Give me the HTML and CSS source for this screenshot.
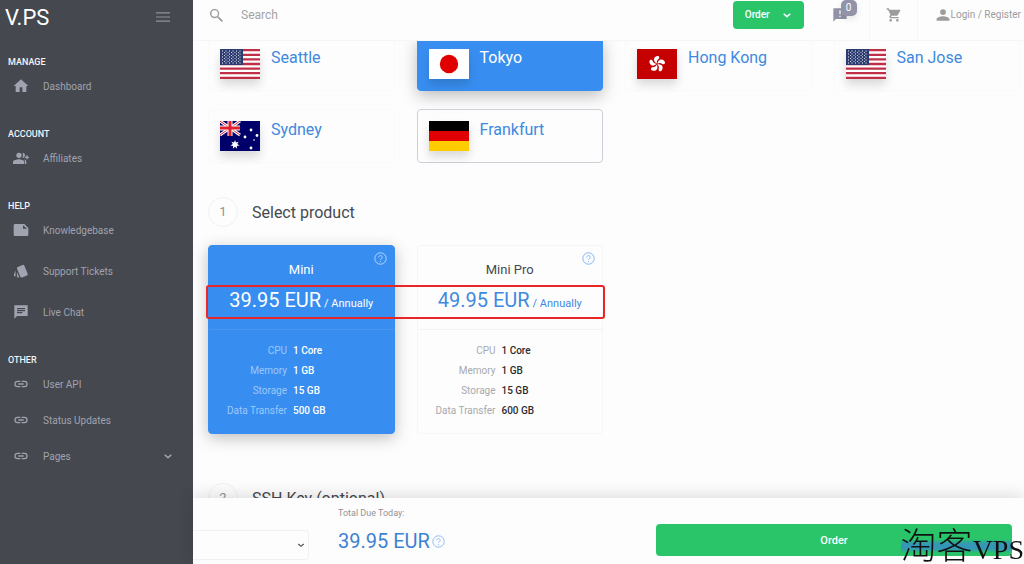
FILE: index.html
```html
<!DOCTYPE html>
<html lang="en">
<head>
    <meta charset="UTF-8">
    <meta name="viewport" content="width=device-width, initial-scale=1.0">
    <title>V.PS</title>
    <link rel="stylesheet" href="styles.css">
</head>
<body>

    <!-- Shared icons -->
    <svg class="sprite" aria-hidden="true">
        <symbol id="i-home" viewBox="0 0 24 24"><path d="M10 21v-7h4v7h6v-9h3L12 2 1 12h3v9z"/></symbol>
        <symbol id="i-group" viewBox="0 0 24 24"><circle cx="9" cy="8" r="4"/><path d="M9 14c-3 0-9 1.400-9 4v3h17v-3c0-2.600-5-4-8-4zM14 4a4 4 0 0 1 0 8c1.400-2.400 1.400-5.600 0-8zM16 14c3 1 4 2 4 4v3h-2v-3c0-2-1-3-2-4zM20 8h2v2h2v2h-2v2h-2v-2h-2v-2h2z"/></symbol>
        <symbol id="i-note" viewBox="0 0 24 24"><path d="M3 3C1.900 3 1 3.900 1 5v14c0 1.100.9 2 2 2h18c1.100 0 2-.9 2-2V9l-6-6zm12 2 6 5h-6z" fill-rule="evenodd"/></symbol>
        <symbol id="i-cards" viewBox="0 0 24 24"><path d="M2.500 19.700l1.300.5v-9l-2.400 5.900c-.4 1 .1 2.200 1.100 2.600zM22 16 17.100 4a2 2 0 0 0-2.600-1L7.100 6a2 2 0 0 0-1.100 2.600l5 12a2 2 0 0 0 2.600 1l7.400-3a2 2 0 0 0 1-2.600zM5.900 19.800c0 1.100.9 2 2 2h1.500l-3.500-8.400z"/></symbol>
        <symbol id="i-chat" viewBox="0 0 24 24"><path fill-rule="evenodd" d="M2 2h20v16H6l-4 4zM6 12v2h8v-2zm0-3v2h12V9zm0-3v2h12V6z"/></symbol>
        <symbol id="i-link" viewBox="0 0 24 24"><path d="M3.900 12A3.100 3.100 0 0 1 7 8.900h4V7H7a5 5 0 0 0 0 10h4v-1.900H7A3.100 3.100 0 0 1 3.900 12zM8 13h8v-2H8zm9-6h-4v1.900h4a3.100 3.100 0 0 1 0 6.200h-4V17h4a5 5 0 0 0 0-10z"/></symbol>
        <symbol id="i-down" viewBox="0 0 24 24"><path d="M4 9l8 7 8-7" fill="none" stroke="currentColor" stroke-width="3.500"/></symbol>
        <symbol id="i-menu" viewBox="0 0 24 24"><path d="M0 4h24v2H0zm0 7h24v2H0zm0 7h24v2H0z"/></symbol>
        <symbol id="i-search" viewBox="0 0 24 24"><path d="M16.500 14.500h-.8l-.3-.3A7 7 0 1 0 14.200 15.400l.3.300v.8l6 6 2-2zm-6.500 0a4.800 4.800 0 1 1 0-9.600 4.800 4.800 0 0 1 0 9.600z"/></symbol>
        <symbol id="i-cart" viewBox="0 0 24 24"><path d="M7 18a2 2 0 1 0 0 4 2 2 0 0 0 0-4zM1 2v2h2l3.600 7.600L5.200 14c-.7 1.300.3 3 1.800 3h12v-2H7.400l1.100-2H16c.8 0 1.400-.4 1.700-1l3.600-6.500c.4-.7-.1-1.500-.9-1.500H5.200l-.9-2zm16 16a2 2 0 1 0 0 4 2 2 0 0 0 0-4z"/></symbol>
        <symbol id="i-user" viewBox="0 0 24 24"><circle cx="12" cy="7" r="5"/><path d="M12 14c-4 0-11 2-11 5v3h22v-3c0-3-7-5-11-5z"/></symbol>
        <symbol id="i-alert" viewBox="0 0 24 24"><path fill-rule="evenodd" d="M2 2h20v16H6l-4 4zM11 5v6h2V5zm0 8v2h2v-2z"/></symbol>
        <symbol id="i-help" viewBox="0 0 24 24"><circle cx="12" cy="12" r="10.500" fill="none" stroke="currentColor" stroke-width="1.800"/><path d="M8.800 10a3.200 3.200 0 1 1 5 2.500c-1.200.8-1.800 1.200-1.800 2.500M12 17v2" fill="none" stroke="currentColor" stroke-width="1.800"/></symbol>
        <symbol id="f-us" viewBox="0 0 40 30">
            <path fill="#fff" d="M0 0h40v30H0z"/>
            <path stroke="#bf3048" stroke-width="2.300" d="M0 1.200h40M0 5.800h40M0 10.400h40M0 15h40M0 19.600h40M0 24.200h40M0 28.800h40"/>
            <path fill="#2c3b70" d="M0 0h23v16H0z"/>
            <path stroke="#fff" stroke-width="1" stroke-dasharray="1 2.500" d="M2 2h20M2 5h20M2 8h20M2 11h20M2 14h20"/>
            <path stroke="#c5cbe0" stroke-width="1" stroke-dasharray="1 2.500" d="M4 3.500h17M4 6.500h17M4 9.500h17M4 12.500h17"/>
        </symbol>
        <symbol id="f-jp" viewBox="0 0 40 30"><path fill="#fff" d="M0 0h40v30H0z"/><circle cx="20" cy="15" r="9.200" fill="#e00000"/></symbol>
        <symbol id="f-hk" viewBox="0 0 40 30">
            <path fill="#c40000" d="M0 0h40v30H0z"/>
            <g fill="#fff">
                <path id="petal" d="M20 14.500c-3.500-1.500-4.500-6 0-7.500 2.500-.6 3 2 1.500 3-1.500 1.200-2 2.500-1.500 4.500z"/>
                <use href="#petal" transform="rotate(72 20 15)"/>
                <use href="#petal" transform="rotate(144 20 15)"/>
                <use href="#petal" transform="rotate(216 20 15)"/>
                <use href="#petal" transform="rotate(288 20 15)"/>
            </g>
        </symbol>
        <symbol id="f-au" viewBox="0 0 40 30">
            <path fill="#00006b" d="M0 0h40v30H0z"/>
            <path stroke="#fff" stroke-width="3" d="M0 0l20 14M20 0L0 14"/>
            <path stroke="#e0202c" stroke-width="1" d="M0 0l20 14M20 0L0 14"/>
            <path stroke="#fff" stroke-width="5" d="M10 0v15M0 7h20"/>
            <path stroke="#e0202c" stroke-width="3" d="M10 0v15M0 7h20"/>
            <path fill="#fff" d="M15 19l1 2.600 2.700-.9-1.500 2.400 2.400 1.500-2.800.3.300 2.800-2.100-1.900-2.100 1.900.3-2.800-2.800-.3 2.400-1.500-1.500-2.400 2.700.9z"/>
            <g fill="#fff"><circle cx="31" cy="9" r="1.400"/><circle cx="25" cy="16" r="1.400"/><circle cx="37" cy="14.500" r="1.400"/><circle cx="31" cy="27" r="1.400"/><circle cx="34" cy="19" r=".8"/></g>
        </symbol>
        <symbol id="f-de" viewBox="0 0 40 30"><path d="M0 0h40v10H0z"/><path fill="#e00000" d="M0 10h40v10H0z"/><path fill="#ffcc00" d="M0 20h40v10H0z"/></symbol>
    </svg>

    <div class="layout">
        <!-- Sidebar -->
        <aside class="sidebar">
            <div class="brand">
                <a href="#" class="logo">V.PS</a>
                <button type="button" class="btn-menu" aria-label="Toggle menu"><svg class="icon"><use href="#i-menu"/></svg></button>
            </div>
            <nav>
                <h4>MANAGE</h4>
                <a href="#"><svg class="icon"><use href="#i-home"/></svg>Dashboard</a>
                <h4>ACCOUNT</h4>
                <a href="#"><svg class="icon"><use href="#i-group"/></svg>Affiliates</a>
                <h4>HELP</h4>
                <div class="nav-group">
                    <a href="#"><svg class="icon"><use href="#i-note"/></svg>Knowledgebase</a>
                    <a href="#"><svg class="icon"><use href="#i-cards"/></svg>Support Tickets</a>
                    <a href="#"><svg class="icon"><use href="#i-chat"/></svg>Live Chat</a>
                </div>
                <h4>OTHER</h4>
                <a href="#"><svg class="icon"><use href="#i-link"/></svg>User API</a>
                <a href="#"><svg class="icon"><use href="#i-link"/></svg>Status Updates</a>
                <a href="#"><svg class="icon"><use href="#i-link"/></svg>Pages<svg class="icon caret"><use href="#i-down"/></svg></a>
            </nav>
        </aside>

        <div class="main">
            <!-- Top bar -->
            <header class="topbar">
                <label for="search"><svg class="icon"><use href="#i-search"/></svg></label>
                <input type="text" id="search" placeholder="Search" aria-label="Search">
                <button type="button" class="btn-top">Order <svg class="icon"><use href="#i-down"/></svg></button>
                <a href="#" class="top-item notify" aria-label="Notifications"><svg class="icon"><use href="#i-alert"/></svg><span class="badge">0</span></a>
                <a href="#" class="top-item" aria-label="Cart"><svg class="icon"><use href="#i-cart"/></svg></a>
                <a href="#" class="login"><svg class="icon"><use href="#i-user"/></svg>Login / Register</a>
            </header>

            <main class="content">
                <!-- Locations -->
                <div class="grid locations">
                    <button type="button" class="location"><svg class="flag"><use href="#f-us"/></svg>Seattle</button>
                    <button type="button" class="location active"><svg class="flag"><use href="#f-jp"/></svg>Tokyo</button>
                    <button type="button" class="location"><svg class="flag"><use href="#f-hk"/></svg>Hong Kong</button>
                    <button type="button" class="location"><svg class="flag"><use href="#f-us"/></svg>San Jose</button>
                    <button type="button" class="location"><svg class="flag"><use href="#f-au"/></svg>Sydney</button>
                    <button type="button" class="location hovered"><svg class="flag"><use href="#f-de"/></svg>Frankfurt</button>
                </div>

                <h2 class="step"><span>1</span>Select product</h2>

                <!-- Products -->
                <div class="grid products">
                    <article class="product active">
                        <svg class="icon help"><use href="#i-help"/></svg>
                        <h3>Mini</h3>
                        <p class="price">39.95 EUR <small>/ Annually</small></p>
                        <dl>
                            <dt>CPU</dt><dd>1 Core</dd>
                            <dt>Memory</dt><dd>1 GB</dd>
                            <dt>Storage</dt><dd>15 GB</dd>
                            <dt>Data Transfer</dt><dd>500 GB</dd>
                        </dl>
                    </article>
                    <article class="product">
                        <svg class="icon help"><use href="#i-help"/></svg>
                        <h3>Mini Pro</h3>
                        <p class="price">49.95 EUR <small>/ Annually</small></p>
                        <dl>
                            <dt>CPU</dt><dd>1 Core</dd>
                            <dt>Memory</dt><dd>1 GB</dd>
                            <dt>Storage</dt><dd>15 GB</dd>
                            <dt>Data Transfer</dt><dd>600 GB</dd>
                        </dl>
                    </article>
                    <div class="highlight"></div>
                </div>

                <h2 class="step"><span>2</span>SSH Key (optional)</h2>
            </main>

            <!-- Order bar -->
            <footer class="orderbar">
                <div class="cycle">
                    <select aria-label="Billing cycle"><option></option></select>
                    <svg class="icon"><use href="#i-down"/></svg>
                </div>
                <div class="total">
                    <p>Total Due Today:</p>
                    <strong>39.95 EUR<svg class="icon"><use href="#i-help"/></svg></strong>
                </div>
                <button type="button" class="btn-order">Order</button>
            </footer>
        </div>
    </div>

    <div class="watermark">淘客<span>VPS</span></div>

</body>
</html>
```
FILE: styles.css
```css
* {
    box-sizing: border-box;
}

body {
    font-family: Roboto, "Liberation Sans", sans-serif;
    font-size: 10px;
    color: #46494f;
    background-color: #fdfdfd;
    margin: 0;
}

a {
    color: inherit;
    text-decoration: none;
}

button, input, select {
    font-family: inherit;
    border: none;
    background: none;
    padding: 0;
}

h2, h3, h4, p, dl, dd {
    margin: 0;
}

.sprite {
    display: none;
}

.icon {
    width: 16px;
    height: 16px;
    fill: currentColor;
    flex: none;
}

.layout {
    display: flex;
    height: 100vh;
    overflow: hidden;
}

/* Sidebar */
.sidebar {
    width: 193px;
    flex: none;
    background-color: #45484f;
    color: #a0a3b0;
}

.brand {
    display: flex;
    justify-content: space-between;
    align-items: center;
    height: 32px;
    padding: 2px 23px 0 5px;
}

.logo {
    color: #fff;
    font-size: 22px;
}

.btn-menu {
    display: flex;
    color: #8f929d;
}

.btn-menu .icon {
    width: 14px;
    height: 14px;
}

.sidebar h4 {
    color: #f4f4f6;
    font-size: 9px;
    font-weight: 500;
    line-height: 12px;
    padding: 24px 8px 0;
}

.sidebar nav a {
    display: flex;
    align-items: center;
    gap: 14px;
    height: 36px;
    padding: 0 20px 0 13px;
}

.nav-group {
    display: grid;
    gap: 5px;
}

.caret {
    width: 10px;
    height: 10px;
    margin-left: auto;
}

/* Top bar */
.main {
    flex: 1;
    min-width: 0;
    display: flex;
    flex-direction: column;
}

.topbar {
    display: flex;
    flex: none;
    height: 41px;
    padding: 0 3px 11px 15px;
    color: #9c9c9f;
    border-bottom: 1px solid #f6f6f7;
    align-items: center;
}

.topbar label {
    height: 16px;
}

.topbar input {
    flex: 1;
    min-width: 0;
    margin-left: 17px;
    font-size: 12px;
}

.topbar input::placeholder {
    color: #a3a3a5;
}

.btn-top {
    display: flex;
    align-items: center;
    gap: 12px;
    height: 28px;
    padding: 0 12px;
    border-radius: 4px;
    background-color: #29c568;
    color: #fff;
    font-size: 10px;
    font-weight: 500;
}

.btn-top .icon {
    width: 10px;
    height: 10px;
}

.top-item {
    display: flex;
    align-items: center;
    justify-content: center;
    width: 48px;
    height: 40px;
    margin-top: 11px;
    padding: 0 0 10px 2px;
    border-right: 1px solid #f7f7f8;
}

.notify {
    width: 66px;
    padding-left: 8px;
    color: #9293a8;
    position: relative;
}

.badge {
    position: absolute;
    top: 0;
    right: 12px;
    width: 16px;
    height: 16px;
    border-radius: 5px;
    background-color: #9293a8;
    color: #fff;
    font-size: 10px;
    line-height: 16px;
    text-align: center;
    box-shadow: 0 3px 6px rgba(0, 0, 0, 0.1);
}

.login {
    display: flex;
    align-items: center;
    gap: 1px;
    padding-left: 18px;
}

.login .icon {
    width: 14px;
    height: 14px;
}

/* Content */
.content {
    flex: 1;
    min-height: 0;
    overflow: hidden;
    padding: 0 4px 0 15px;
}

.grid {
    display: grid;
    grid-template-columns: repeat(4, 1fr);
    gap: 18px 22px;
}

/* first row is partly scrolled under the top bar */
.locations {
    margin-top: -4px;
}

.location {
    display: flex;
    gap: 11px;
    height: 54px;
    padding: 11px;
    border: 1px solid #fafafb;
    border-radius: 4px;
    color: #4089e0;
    font-size: 16px;
    line-height: 18px;
}

.location.active {
    background-color: #388ef0;
    border-color: #388ef0;
    color: #fff;
    box-shadow: 0 5px 16px rgba(0, 0, 0, 0.25);
}

.location.hovered {
    border-color: #cdd0d8;
}

.flag {
    width: 40px;
    height: 30px;
    flex: none;
    box-shadow: 0 6px 10px rgba(0, 0, 0, 0.14);
}

.step {
    display: flex;
    align-items: center;
    gap: 14px;
    margin: 34px 0 18px;
    font-size: 16px;
    font-weight: 400;
}

.step span {
    width: 30px;
    height: 30px;
    border: 1px solid #f1f1f3;
    border-radius: 50%;
    color: #909195;
    font-size: 13px;
    line-height: 28px;
    text-align: center;
}

.products {
    position: relative;
    margin-bottom: 49px;
}

.product {
    position: relative;
    border: 1px solid #f6f6f7;
    border-radius: 4px;
    text-align: center;
}

.product.active {
    background-color: #388ef0;
    border-color: #388ef0;
    color: #fff;
    box-shadow: 0 4px 16px rgba(0, 0, 0, 0.25);
}

.help {
    position: absolute;
    top: 6px;
    right: 7px;
    width: 13px;
    height: 13px;
    color: #7db3f5;
}

.active .help {
    color: #b5d6fb;
}

.product h3 {
    padding-top: 14px;
    font-size: 13px;
    font-weight: 400;
    line-height: 20px;
}

.price {
    height: 50px;
    padding-top: 6px;
    border-bottom: 1px solid #f3f3f4;
    color: #4089e0;
    font-size: 20px;
    line-height: 28px;
}

.price small {
    margin-left: -2px;
    font-size: 11px;
}

.active .price {
    color: #fff;
    border-color: #4a96ee;
}

.product dl {
    display: grid;
    grid-template-columns: 78px 1fr;
    column-gap: 6px;
    padding: 11px 0 12px;
    line-height: 20px;
}

.product dt {
    text-align: right;
    color: #a8a9ad;
}

.product dd {
    text-align: left;
    font-weight: 500;
    color: #2b2c30;
}

.active dt {
    color: #9cc8fa;
}

.active dd {
    color: #fff;
}

.highlight {
    position: absolute;
    top: 40px;
    left: -2px;
    width: calc(50% - 7px);
    height: 34px;
    border: 2px solid #ea2525;
    border-radius: 3px;
}

/* Order bar */
.orderbar {
    display: flex;
    flex: none;
    position: relative;
    height: 66px;
    padding-right: 12px;
    background-color: #fdfdfd;
    box-shadow: 0 -2px 16px rgba(0, 0, 0, 0.14);
}

.cycle {
    position: relative;
    width: 116px;
    height: 30px;
    margin-top: 32px;
}

.cycle select {
    appearance: none;
    width: 100%;
    height: 100%;
    border: 1px solid #f1f1f2;
    border-left: none;
    border-radius: 0 4px 4px 0;
}

.cycle .icon {
    position: absolute;
    top: 11px;
    right: 4px;
    width: 8px;
    height: 8px;
    pointer-events: none;
}

.total {
    flex: 1;
    padding: 8px 0 0 29px;
}

.total p {
    color: #929398;
    font-size: 9px;
    line-height: 14px;
}

.total strong {
    display: flex;
    align-items: center;
    gap: 2px;
    margin-top: 7px;
    color: #3d82d3;
    font-size: 20px;
    font-weight: 400;
    line-height: 28px;
}

.total .icon {
    width: 13px;
    height: 13px;
    color: #8dbcf0;
}

.btn-order {
    width: 356px;
    height: 32px;
    margin-top: 26px;
    border-radius: 4px;
    background-color: #29c568;
    color: #fff;
    font-size: 11px;
    font-weight: 500;
}

.watermark {
    position: fixed;
    right: 0;
    bottom: 0;
    color: #111;
    font-family: "Liberation Serif", "Noto Sans CJK SC", serif;
    font-size: 36px;
    font-weight: 300;
    line-height: 28px;
    background: linear-gradient(transparent 20%, rgba(60, 120, 235, 0.6) 35%, rgba(60, 120, 235, 0.6) 50%, transparent 65%) no-repeat 0 0 / 90% 100%;
}

.watermark span {
    font-size: 28px;
}
```
